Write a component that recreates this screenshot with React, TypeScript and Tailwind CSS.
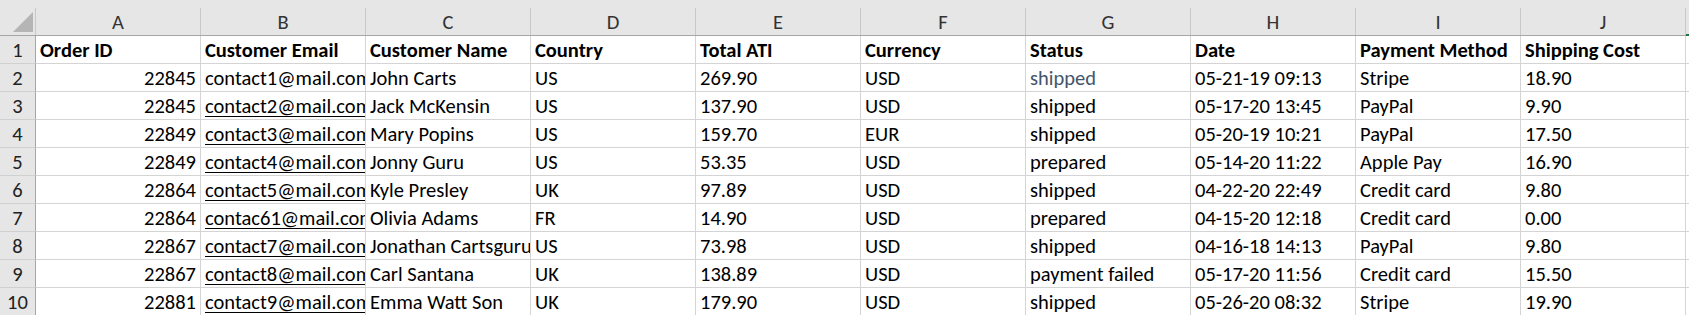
const cols = ["A", "B", "C", "D", "E", "F", "G", "H", "I", "J"];

type Cell = { v: string; right?: boolean; link?: boolean; muted?: boolean };

const header = [
  "Order ID",
  "Customer Email",
  "Customer Name",
  "Country",
  "Total ATI",
  "Currency",
  "Status",
  "Date",
  "Payment Method",
  "Shipping Cost",
];

const orders = [
  ["22845", "contact1@mail.com", "John Carts", "US", "269.90", "USD", "shipped", "05-21-19 09:13", "Stripe", "18.90"],
  ["22845", "contact2@mail.com", "Jack McKensin", "US", "137.90", "USD", "shipped", "05-17-20 13:45", "PayPal", "9.90"],
  ["22849", "contact3@mail.com", "Mary Popins", "US", "159.70", "EUR", "shipped", "05-20-19 10:21", "PayPal", "17.50"],
  ["22849", "contact4@mail.com", "Jonny Guru", "US", "53.35", "USD", "prepared", "05-14-20 11:22", "Apple Pay", "16.90"],
  ["22864", "contact5@mail.com", "Kyle Presley", "UK", "97.89", "USD", "shipped", "04-22-20 22:49", "Credit card", "9.80"],
  ["22864", "contac61@mail.com", "Olivia Adams", "FR", "14.90", "USD", "prepared", "04-15-20 12:18", "Credit card", "0.00"],
  ["22867", "contact7@mail.com", "Jonathan Cartsguru", "US", "73.98", "USD", "shipped", "04-16-18 14:13", "PayPal", "9.80"],
  ["22867", "contact8@mail.com", "Carl Santana", "UK", "138.89", "USD", "payment failed", "05-17-20 11:56", "Credit card", "15.50"],
  ["22881", "contact9@mail.com", "Emma Watt Son", "UK", "179.90", "USD", "shipped", "05-26-20 08:32", "Stripe", "19.90"],
];

function toCells(row: string[], i: number): Cell[] {
  return row.map((v, c) => ({
    v,
    right: c === 0,
    link: c === 1 && i > 0,
    muted: c === 6 && i === 0,
  }));
}

function RowNumber({ n }: { n: number }) {
  return (
    <div className="w-[36px] shrink-0 h-full flex items-center justify-center pt-[2px] bg-[#e6e6e6] border-r border-b border-r-[#a6a6a6] border-b-[#d0d0d0] text-[#222]">
      {n}
    </div>
  );
}

export default function App() {
  return (
    <div
      className="w-[1689px] h-[315px] overflow-hidden bg-white text-[20.5px] leading-none text-black"
      style={{ fontFamily: "Carlito, Lato, 'Noto Sans', sans-serif" }}
    >
      {/* column headers */}
      <div className="bg-[#e6e6e6] pt-[8px]">
        <div className="flex h-[28px] border-b border-[#a6a6a6]">
          <div className="w-[36px] shrink-0 border-r border-[#c8c8c8] relative">
            <svg className="absolute -top-[8px] left-0" width="36" height="35" viewBox="0 0 36 35">
              <polygon points="33,12 33,32 13,32" fill="#b5b5b5" />
            </svg>
          </div>
          {cols.map((c) => (
            <div
              key={c}
              className="w-[165px] shrink-0 border-r border-[#c8c8c8] flex items-center justify-center pt-[2px] text-[#333]"
            >
              {c}
            </div>
          ))}
          <div className="flex-1 border-b-2 border-[#217346] -mb-[1px]" />
        </div>
      </div>

      {/* title row */}
      <div className="flex h-[28px]">
        <RowNumber n={1} />
        {header.map((h) => (
          <div
            key={h}
            className="w-[165px] shrink-0 border-r border-b border-[#d4d4d4] flex items-center pl-[4px] pt-[2px] font-bold whitespace-nowrap overflow-hidden"
          >
            {h}
          </div>
        ))}
        <div className="flex-1 border-b border-[#d4d4d4]" />
      </div>

      {orders.map((row, i) => (
        <div key={i} className="flex h-[28px]">
          <RowNumber n={i + 2} />
          {toCells(row, i).map((cell, c) => (
            <div
              key={c}
              className={`w-[165px] shrink-0 border-r border-b border-[#d4d4d4] flex items-center pt-[2px] whitespace-nowrap overflow-hidden ${
                cell.right ? "justify-end pr-[4px]" : "pl-[4px]"
              } ${cell.muted ? "text-[#44546a]" : ""}`}
            >
              <span className={cell.link ? "underline decoration-1 underline-offset-[3px]" : ""}>{cell.v}</span>
            </div>
          ))}
          <div className="flex-1 border-b border-[#d4d4d4]" />
        </div>
      ))}
    </div>
  );
}
